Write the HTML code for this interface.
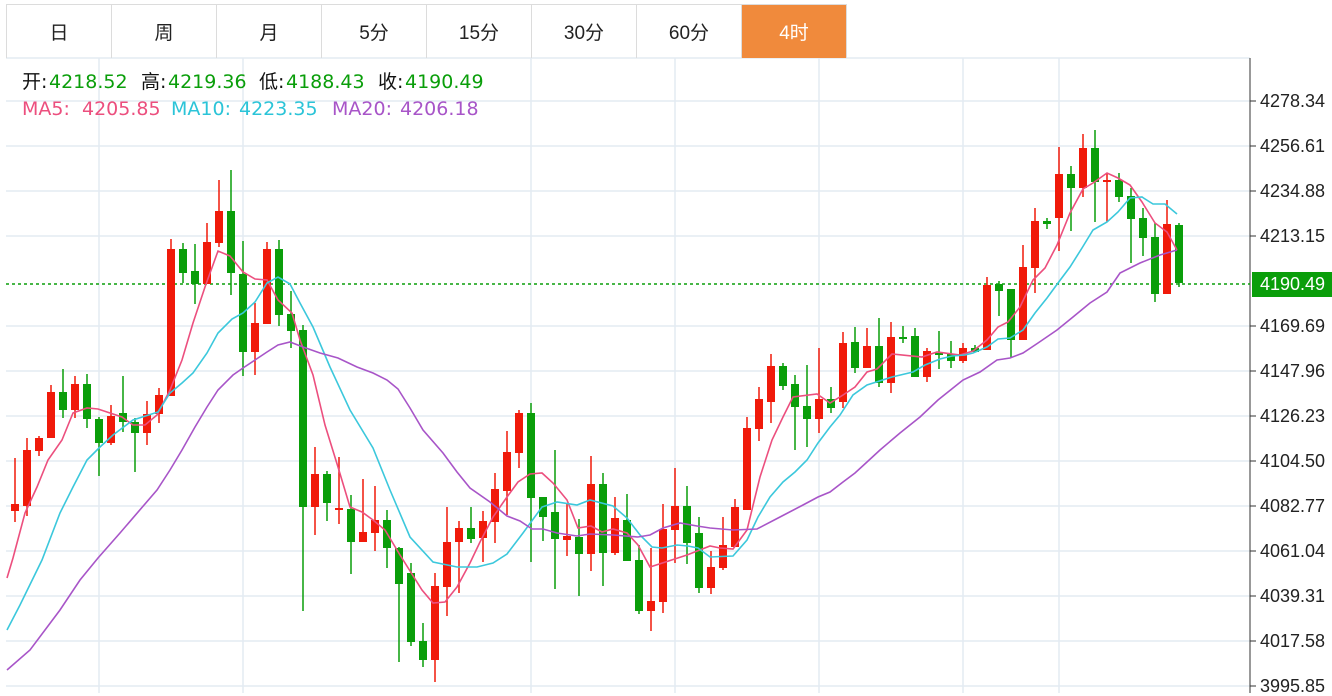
<!DOCTYPE html>
<html><head><meta charset="utf-8"><style>
html,body{margin:0;padding:0;background:#fff;width:1332px;height:693px;overflow:hidden;font-family:"Liberation Sans","Noto Sans CJK SC",sans-serif}
.tabs{position:absolute;left:6px;top:4px;height:54px;display:flex;border-top:1px solid #dcdcdc}
.tab{width:104px;height:53px;border-right:1px solid #dcdcdc;display:flex;align-items:center;justify-content:center;font-size:19px;color:#222}
.tab:first-child{border-left:1px solid #dcdcdc}
.tab.on{background:#f08a3c;color:#fff}
.hd{position:absolute;font-size:19px;white-space:nowrap;font-family:"DejaVu Sans","Noto Sans CJK SC",sans-serif;line-height:22px}
.g{color:#0a9e0a}.k{color:#111}
.ax{position:absolute;left:1260px;font-size:18px;color:#222;line-height:20px}
</style></head><body>
<svg width="1332" height="693" style="position:absolute;left:0;top:0">
<g stroke="#e3ebf2" stroke-width="1.5">
<path d="M6 58H1250M6 101H1250M6 146H1250M6 191H1250M6 236H1250M6 326H1250M6 371H1250M6 416H1250M6 461H1250M6 506H1250M6 551H1250M6 596H1250M6 641H1250M6 686H1250"/>
<path d="M99 58V693M243 58V693M531 58V693M675 58V693M819 58V693M963 58V693M1059 58V693"/>
</g>
<path d="M1250 58V693" stroke="#333" stroke-width="1"/>
<path d="M1250 101h6M1250 146h6M1250 191h6M1250 236h6M1250 326h6M1250 371h6M1250 416h6M1250 461h6M1250 506h6M1250 551h6M1250 596h6M1250 641h6M1250 686h6" stroke="#333"/>
<path d="M6 284H1250" stroke="#0a9e0a" stroke-width="1.5" stroke-dasharray="3,3"/>
<g stroke="#f01a0a">
<path stroke-width="1.5" d="M15 458V522M27 438V516M39 436V456M51 385V438M75 376V418M111 405V445M147 401V445M159 388V423M171 239V396M207 223V284M219 180V247M255 303V375M267 242V324M315 447V535M339 457V524M363 479V542M375 486V551M435 573V682M447 507V616M459 521V593M483 511V562M495 473V543M507 431V515M519 410V468M567 504V556M591 456V571M615 497V555M651 548V631M663 504V613M675 468V563M711 551V594M723 517V570M735 499V547M747 417V510M759 387V441M771 354V423M819 348V433M843 332V408M867 328V368M891 322V393M927 348V382M963 343V363M987 277V350M1023 245V340M1035 208V293M1059 147V251M1083 134V197M1107 173V222M1167 200V294"/>
<path stroke-width="8" d="M15 504V511M27 450V506M39 438V451M51 392V438M75 384V410M111 416V443M147 414V433M159 395V414M171 249V396M207 242V284M219 211V243M255 323V352M267 249V324M315 474V507M339 508V510M363 532V542M375 520V533M435 586V660M447 542V587M459 528V542M483 521V538M495 489V522M507 452V491M519 413V453M567 536V540M591 484V554M615 518V553M651 601V611M663 529V602M675 506V530M711 567V588M723 545V568M735 507V547M747 428V510M759 399V429M771 366V402M819 399V419M843 343V402M867 346V368M891 337V383M927 351V377M963 348V361M987 285V350M1023 267V340M1035 221V268M1059 174V218M1083 148V188M1107 180V182M1167 224V294"/>
</g>
<g stroke="#0a9e0a">
<path stroke-width="1.5" d="M63 369V418M87 374V428M99 417V476M123 376V432M135 418V472M183 243V283M195 244V304M231 170V295M243 241V376M279 240V326M291 291V348M303 325V611M327 471V521M351 495V574M387 510V568M399 547V662M411 563V646M423 623V667M471 507V543M531 403V562M543 497V541M555 450V589M579 519V596M603 473V586M627 494V561M639 545V614M687 486V564M699 517V593M783 363V390M795 375V450M807 365V447M831 387V413M855 327V373M879 318V387M903 326V343M915 328V377M939 331V369M951 341V368M975 345V352M999 281V316M1011 289V358M1047 218V229M1071 166V231M1095 130V222M1119 173V202M1131 188V263M1143 208V256M1155 223V302M1179 223V287"/>
<path stroke-width="8" d="M63 392V410M87 384V419M99 419V443M123 413V422M135 422V433M183 249V273M195 271V284M231 211V273M243 274V352M279 249V315M291 314V331M303 330V507M327 474V503M351 509V542M387 520V548M399 548V584M411 573V642M423 641V660M471 528V539M531 413V498M543 497V517M555 512V539M579 537V554M603 484V553M627 520V561M639 560V611M687 506V543M699 533V588M783 366V386M795 384V407M807 406V419M831 399V408M855 342V368M879 346V383M903 337V339M915 336V377M939 353V355M951 354V361M975 348V352M999 284V291M1011 289V340M1047 221V224M1071 174V188M1095 148V182M1119 180V197M1131 196V219M1143 218V238M1155 237V294M1179 225V283"/>
</g>
<g fill="none" stroke-width="1.6">
<polyline stroke="#ec4f7e" points="7,578 13,558 25,513 37,487 48,460 62,440 73,413 87,408 98,409 110,413 122,417 133,425 145,425 157,415 170,390 182,360 193,323 205,287 218,251 230,256 243,272 255,279 267,280 278,300 292,313 300,340 313,375 325,425 338,467 350,507 362,512 373,520 385,530 400,555 422,590 433,603 445,602 457,587 470,563 480,542 493,517 507,497 518,482 530,474 542,473 553,483 567,500 578,528 591,526 602,532 613,529 627,533 638,545 650,567 687,555 710,546 720,548 733,549 747,530 760,477 772,440 783,417 793,397 817,394 830,403 843,395 855,387 867,372 877,369 892,354 922,357 937,352 960,355 973,351 987,340 998,327 1008,322 1020,307 1033,280 1045,268 1057,245 1070,213 1083,189 1093,183 1107,173 1118,178 1130,185 1142,202 1155,223 1167,232 1177,250"/>
<polyline stroke="#3cc8dc" points="7,630 20,605 42,560 60,513 73,487 87,460 100,447 113,435 133,420 158,412 170,393 182,383 193,373 207,353 218,333 232,319 243,313 255,302 267,283 278,277 290,284 300,303 313,327 330,367 350,410 373,448 390,490 410,537 433,562 457,567 477,567 493,563 507,554 523,533 542,507 557,502 577,505 590,500 613,506 627,518 640,535 652,547 662,548 677,545 688,546 698,548 710,557 733,556 747,540 758,517 770,497 783,482 795,472 807,460 818,443 830,427 840,415 853,395 867,385 892,377 913,372 925,365 940,359 952,356 965,355 973,353 987,347 998,339 1010,338 1023,330 1035,313 1047,298 1058,283 1070,267 1082,248 1093,230 1107,222 1118,212 1130,198 1142,197 1153,204 1165,204 1177,214"/>
<polyline stroke="#a855c8" points="7,670 30,650 60,610 80,580 98,558 120,533 157,490 170,470 182,450 195,427 207,407 218,390 233,375 243,368 255,360 267,352 278,345 290,342 303,347 320,353 338,358 357,367 373,373 387,380 398,389 410,408 423,430 443,453 457,472 470,488 490,502 507,516 520,521 532,529 543,529 557,533 577,536 590,534 613,535 638,537 650,535 663,528 680,523 697,526 710,528 733,530 757,529 780,517 803,505 818,497 830,492 843,482 855,473 867,462 880,450 900,433 920,417 938,400 953,388 963,380 980,372 997,360 1010,358 1023,353 1038,343 1057,330 1073,317 1090,303 1107,292 1120,273 1140,263 1160,255 1177,250"/>
</g>
<rect x="1252" y="272" width="80" height="25" fill="#0a9e0a"/>
</svg>
<div class="tabs"><div class="tab">日</div><div class="tab">周</div><div class="tab">月</div><div class="tab">5分</div><div class="tab">15分</div><div class="tab">30分</div><div class="tab">60分</div><div class="tab on">4时</div></div>
<div class="hd k" style="top:71px;left:22px">开:</div><div class="hd g" style="top:71px;left:49px">4218.52</div>
<div class="hd k" style="top:71px;left:141px">高:</div><div class="hd g" style="top:71px;left:168px">4219.36</div>
<div class="hd k" style="top:71px;left:259px">低:</div><div class="hd g" style="top:71px;left:286px">4188.43</div>
<div class="hd k" style="top:71px;left:378px">收:</div><div class="hd g" style="top:71px;left:405px">4190.49</div>
<div class="hd" style="top:98px;left:22px;color:#ec4f7e">MA5:</div><div class="hd" style="top:98px;left:82px;color:#ec4f7e">4205.85</div>
<div class="hd" style="top:98px;left:171px;color:#2bc4d8">MA10:</div><div class="hd" style="top:98px;left:239px;color:#2bc4d8">4223.35</div>
<div class="hd" style="top:98px;left:332px;color:#a855c8">MA20:</div><div class="hd" style="top:98px;left:400px;color:#a855c8">4206.18</div>
<div class="ax" style="top:91px">4278.34</div>
<div class="ax" style="top:136px">4256.61</div>
<div class="ax" style="top:181px">4234.88</div>
<div class="ax" style="top:226px">4213.15</div>
<div class="ax" style="top:274px;color:#fff">4190.49</div>
<div class="ax" style="top:316px">4169.69</div>
<div class="ax" style="top:361px">4147.96</div>
<div class="ax" style="top:406px">4126.23</div>
<div class="ax" style="top:451px">4104.50</div>
<div class="ax" style="top:496px">4082.77</div>
<div class="ax" style="top:541px">4061.04</div>
<div class="ax" style="top:586px">4039.31</div>
<div class="ax" style="top:631px">4017.58</div>
<div class="ax" style="top:676px">3995.85</div>
</body></html>
